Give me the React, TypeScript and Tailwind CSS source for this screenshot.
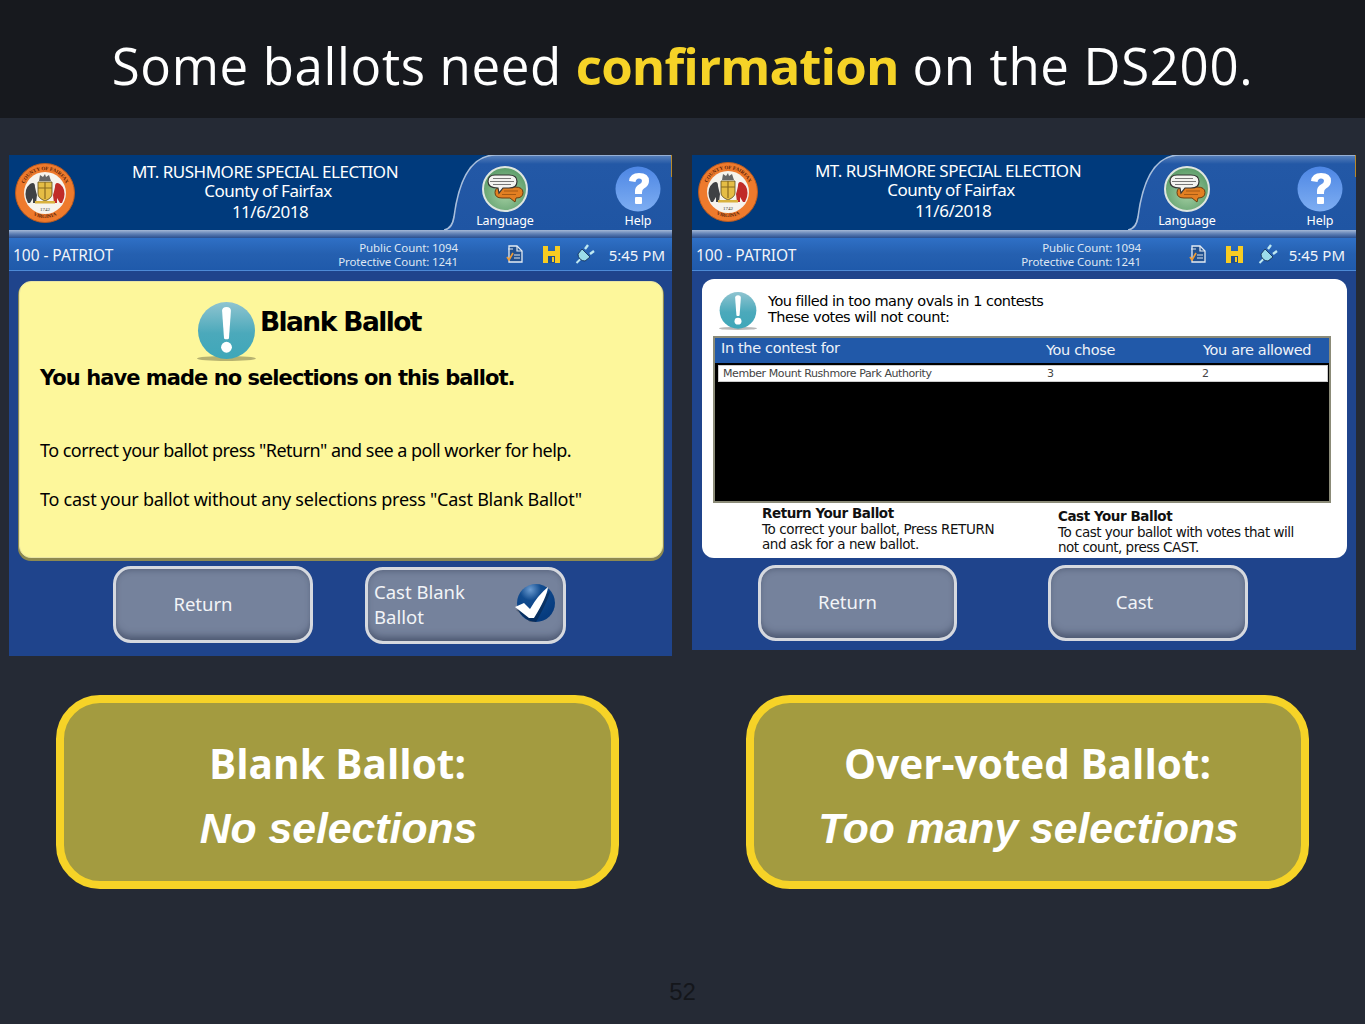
import React from "react";

const TAHOMA = "font-['Noto_Sans','DejaVu_Sans',sans-serif]";

function Seal() {
  return (
    <svg width="60" height="60" viewBox="0 0 60 60" className="shrink-0">
      <defs>
        <path id="sealTop" d="M7 30 A23 23 0 0 1 53 30" />
        <path id="sealBot" d="M5 30 A25 25 0 0 0 55 30" />
      </defs>
      <circle cx="30" cy="30" r="29.5" fill="#ee7a2c" />
      <circle cx="30" cy="30" r="29.5" fill="none" stroke="#b85a20" strokeWidth="1" />
      <text fontSize="5" fontWeight="700" fill="#5a2208" fontFamily="Liberation Serif, serif">
        <textPath href="#sealTop" startOffset="50%" textAnchor="middle">COUNTY OF FAIRFAX</textPath>
      </text>
      <text fontSize="5" fontWeight="700" fill="#5a2208" fontFamily="Liberation Serif, serif">
        <textPath href="#sealBot" startOffset="50%" textAnchor="middle">VIRGINIA</textPath>
      </text>
      <circle cx="30" cy="30" r="21" fill="#f6f3ec" />
      <path d="M24 18 l12 0 l-2 -6 l-3 2 l-1 -3 l-2 3 l-3 -2z" fill="#666" />
      <path d="M23 19 h14 v12 q0 4 -7 7 q-7 -3 -7 -7z" fill="#e5bd45" stroke="#5b4a1c" strokeWidth="0.8" />
      <path d="M23 25 h14 M30 19 v17" stroke="#8a6a20" strokeWidth="1.2" />
      <path d="M11 35 q-2 -9 4 -14 q5 -3 5 3 q1 5 2 8 l-1 8 l-3 0 l0 -5 l-3 5 l-2 0z" fill="#3f4144" />
      <path d="M49 35 q2 -9 -4 -14 q-5 -3 -5 3 q-1 5 -2 8 l1 8 l3 0 l0 -5 l3 5 l2 0z" fill="#c02b28" />
      <rect x="20" y="38" width="20" height="2.5" fill="#d9b23e" />
      <text x="30" y="47.5" textAnchor="middle" fontSize="5" fill="#333" fontFamily="Liberation Serif, serif">1742</text>
    </svg>
  );
}

function LangIcon() {
  return (
    <svg width="46" height="46" viewBox="0 0 46 46">
      <defs>
        <radialGradient id="lg" cx="50%" cy="60%" r="55%">
          <stop offset="0%" stopColor="#a6d0a4" />
          <stop offset="100%" stopColor="#5f9f6c" />
        </radialGradient>
      </defs>
      <circle cx="23" cy="23" r="22" fill="url(#lg)" stroke="#dfe6e0" strokeWidth="2" />
      <path d="M20 21 h13 q8 0 8 5.500 q0 5.500 -7 5.500 l-1 4 l-5 -4 h-8 q-7 0 -7 -5.500 q0 -5.500 7 -5.500z" fill="#e27f22" stroke="#6b3c10" strokeWidth="1" />
      <path d="M22 25 h14 M20 28.500 h14" stroke="#a55a14" strokeWidth="1" />
      <path d="M13 9 h14 q8 0 8 6.500 q0 6.500 -8 6.500 h-6 l-4 5 l-1 -5 q-10 0 -10 -6.500 q0 -6.500 7 -6.500z" fill="#f3f3f0" stroke="#333" strokeWidth="1.2" />
      <path d="M11 12.500 h18 M8 15.500 h24 M11 18.500 h18" stroke="#777" strokeWidth="1.2" />
    </svg>
  );
}

function HelpIcon() {
  return (
    <svg width="46" height="46" viewBox="0 0 46 46">
      <defs>
        <linearGradient id="hg" x1="0" y1="0" x2="0" y2="1">
          <stop offset="0%" stopColor="#4d86e4" />
          <stop offset="100%" stopColor="#7eaef2" />
        </linearGradient>
      </defs>
      <circle cx="23" cy="23" r="22.5" fill="url(#hg)" />
      <path d="M14 15 q1 -8 10 -8 q10 0 10 8 q0 5 -5 7.500 q-2 1.200 -2 4 v1.500 h-7 v-3 q0 -4.500 4 -6.500 q3 -1.500 3 -3.500 q0 -2.500 -3 -2.500 q-3 0 -3.500 3.500z" fill="#fff" />
      <rect x="20" y="31" width="7" height="7" rx="1" fill="#fff" />
    </svg>
  );
}

function StatusIcons({ x }: { x: string }) {
  return (
    <div className={`flex items-center -mt-[3px] ${x}`}>
      <svg width="20" height="20" viewBox="0 0 20 20">
        <path d="M4 2 h8 l5 5 v11 h-13z" fill="#20508f" stroke="#e4ebf3" strokeWidth="1.3" />
        <path d="M12 2 v5 h5" fill="none" stroke="#e4ebf3" strokeWidth="1.2" />
        <path d="M3 5 h5 M9 11 h6 M9 14 h6" stroke="#dbe3ee" strokeWidth="1.2" />
        <path d="M2 13 l2 3 l4 -7" fill="none" stroke="#f09a30" strokeWidth="1.7" />
      </svg>
      <svg width="19" height="19" viewBox="0 0 19 19" className="ml-[17px]">
        <path d="M1 1 h5 v5 h7 v-5 h5 v17 h-17z" fill="#f8cc22" />
        <rect x="6" y="11" width="7" height="7" fill="#20508f" />
        <rect x="10" y="12" width="2" height="5" fill="#f8cc22" />
      </svg>
      <svg width="20" height="20" viewBox="0 0 20 20" className="ml-[14px]">
        <path d="M1.500 19 l4 -4" stroke="#bfe9f2" strokeWidth="2" />
        <path d="M7 5 l8 8 l-5 4 q-3 0 -5 -2 q-2 -2 -2 -5z" fill="#9bdcea" stroke="#10294e" strokeWidth="0.8" />
        <path d="M10 5 l3 -4 M15 10 l4 -3" stroke="#bfe9f2" strokeWidth="2.400" />
      </svg>
    </div>
  );
}

function Alert({ size }: { size: number }) {
  const id = `al${size}`;
  return (
    <svg width={size} height={size} viewBox="0 0 60 60" className="shrink-0">
      <defs>
        <linearGradient id={id} x1="0" y1="0" x2="0" y2="1">
          <stop offset="0%" stopColor="#8fc4d0" />
          <stop offset="55%" stopColor="#4ba9bb" />
          <stop offset="100%" stopColor="#3fa7b9" />
        </linearGradient>
      </defs>
      <ellipse cx="30" cy="57.500" rx="30" ry="2.500" fill="#000" opacity="0.28" />
      <circle cx="30" cy="29" r="29" fill={`url(#${id})`} />
      <path d="M25.500 9 q0 -4 4.500 -4 q4.500 0 4.500 4 l-2 28 q-2.500 2 -5 0z" fill="#fff" />
      <circle cx="30" cy="46" r="5.500" fill="#fff" />
    </svg>
  );
}

function Check() {
  return (
    <svg width="44" height="40" viewBox="0 0 44 40">
      <defs>
        <radialGradient id="ck" cx="35%" cy="15%" r="80%">
          <stop offset="0%" stopColor="#6b9bd0" />
          <stop offset="35%" stopColor="#124c8f" />
          <stop offset="100%" stopColor="#063b7e" />
        </radialGradient>
      </defs>
      <circle cx="23" cy="19" r="19" fill="url(#ck)" />
      <path d="M2 24 l10 -4 l6 6 q8 -14 18 -21 q-2 10 -14 31 l-6 0z" fill="#000" opacity="0.25" transform="translate(1 2)" />
      <path d="M2 23 l9 -4 l6 6 q8 -14 18 -22 q-1 10 -14 31 l-5 0z" fill="#fff" />
    </svg>
  );
}

function Btn({ w, h, cls, children }: { w: string; h: string; cls?: string; children: React.ReactNode }) {
  return (
    <div
      className={`${w} ${h} ${cls ?? ""} shrink-0 rounded-[18px] border-[3px] border-[#d6d9df] bg-[#75829c] shadow-[inset_0_-7px_7px_-3px_rgba(50,60,85,0.6),inset_0_5px_5px_-3px_rgba(70,80,105,0.5)] flex items-center text-[#f2f4f7] text-[18.500px] leading-[25px] ${TAHOMA}`}
    >
      {children}
    </div>
  );
}

function Shell({
  w,
  h,
  nudge,
  statusPr,
  children,
}: {
  w: string;
  h: string;
  nudge: boolean;
  statusPr: string;
  children: React.ReactNode;
}) {
  const tid = nudge ? "tA" : "tB";
  return (
    <div className={`${w} ${h} shrink-0 bg-[#1f448c] flex flex-col ${TAHOMA}`}>
      <div className="h-[75px] bg-[#003a7c] relative flex shrink-0">
        <svg className="absolute right-0 top-0" width="228" height="75" viewBox="0 0 228 75">
          <defs>
            <linearGradient id={tid} x1="0" y1="0" x2="0" y2="1">
              <stop offset="0%" stopColor="#5b83bd" />
              <stop offset="12%" stopColor="#2358a6" />
              <stop offset="100%" stopColor="#1f55a3" />
            </linearGradient>
          </defs>
          <path d="M0 75 Q8 74 10 62 Q18 0 52 0 H228 V75 Z" fill={`url(#${tid})`} />
          <path d="M0 75 Q8 74 10 62 Q18 0 52 0 H228" fill="none" stroke="#a9bfdc" strokeWidth="1.600" />
          <rect x="227" y="0" width="1" height="22" fill="#b8892a" />
        </svg>
        <div className={`w-[60px] ml-[6px] shrink-0 ${nudge ? "mt-[8px]" : "mt-[7px]"}`}>
          <Seal />
        </div>
        <div className={`w-[390px] text-white text-[17px] leading-[19px] tracking-[-0.5px] text-center relative ${nudge ? "pt-[7px]" : "pt-[6px]"}`}>
          <div className="pr-[10px] whitespace-nowrap">MT. RUSHMORE SPECIAL ELECTION</div>
          <div className="pr-[4px]">County of Fairfax</div>
          <div className="pt-[2px]">11/6/2018</div>
        </div>
        <div className="absolute right-0 top-[11px] w-[228px] h-[64px]">
          <div className={`absolute ${nudge ? "left-[26px]" : "left-[24px]"} top-0 w-[70px] flex flex-col items-center`}>
            <LangIcon />
            <span className="mt-[2px] text-white text-[12.500px] leading-[14px] tracking-[-0.1px]">Language</span>
          </div>
          <div className={`absolute ${nudge ? "left-[166px]" : "left-[164px]"} top-0 w-[56px] flex flex-col items-center`}>
            <HelpIcon />
            <span className="mt-[2px] text-white text-[12.500px] leading-[14px] tracking-[-0.1px]">Help</span>
          </div>
        </div>
      </div>
      <div className="h-[8px] shrink-0 bg-gradient-to-b from-[#a4b8d6] via-[#5d7eb3] to-[#2a4f8f]" />
      <div className="h-[33px] shrink-0 pt-[3px] bg-gradient-to-b from-[#2f70c6] via-[#2560b0] to-[#1f5aab] border-b border-[#4d8ad6] flex items-center">
        <span className="pl-[4px] text-[#f2f5fa] text-[15.500px] tracking-[-0.05px] w-[200px]">100 - PATRIOT</span>
        <div className="w-[249px] -mt-[2px] text-right text-[#dfe7f3] text-[11.500px] leading-[14px] tracking-[-0.1px]">
          <div>Public Count: 1094</div>
          <div>Protective Count: 1241</div>
        </div>
        <StatusIcons x="ml-[47px]" />
        <span className={`ml-auto ${statusPr} text-[#f2f5fa] text-[15px]`}>5:45 PM</span>
      </div>
      {children}
    </div>
  );
}

function LeftPanel() {
  return (
    <Shell w="w-[663px]" h="h-[501px]" nudge statusPr="pr-[7px]">
      <div className="mt-[10px] ml-[10px] mr-[9px] h-[277px] bg-[#fdf79b] rounded-[12px] border border-[#e8e4a4] shadow-[0_2px_0_1px_#8e8a50] text-black flex flex-col">
        <div className="flex items-start pl-[177px] pt-[20px]">
          <Alert size={59} />
          <span className="ml-[4px] mt-[3px] text-[26.500px] leading-[34px] font-bold font-['DejaVu_Sans',sans-serif] tracking-[-1.600px]">Blank Ballot</span>
        </div>
        <div className="pl-[20px] mt-[3px] text-[21px] leading-[28px] font-bold font-['DejaVu_Sans',sans-serif] tracking-[-0.950px]">
          You have made no selections on this ballot.
        </div>
        <div className="pl-[20px] mt-[45px] text-[18px] leading-[26px] tracking-[-0.530px]">
          To correct your ballot press "Return" and see a poll worker for help.
        </div>
        <div className="pl-[20px] mt-[23px] text-[18px] leading-[26px] tracking-[-0.250px]">
          To cast your ballot without any selections press "Cast Blank Ballot"
        </div>
      </div>
      <div className="flex mt-[8px] pl-[104px]">
        <Btn w="w-[200px]" h="h-[77px]" cls="justify-center pr-[20px] pb-[2px]">Return</Btn>
        <Btn w="w-[201px]" h="h-[77px]" cls="ml-[52px] mt-[1px] pl-[6px] pb-[4px] justify-between pr-[6px]">
          <span>Cast Blank<br />Ballot</span>
          <Check />
        </Btn>
      </div>
    </Shell>
  );
}

function RightPanel() {
  return (
    <Shell w="w-[664px]" h="h-[495px]" nudge={false} statusPr="pr-[11px]">
      <div className="mt-[8px] ml-[10px] mr-[9px] h-[279px] bg-white rounded-[12px] text-black flex flex-col">
        <div className="flex items-start pl-[17px] pt-[13px] h-[57px] shrink-0">
          <Alert size={38} />
          <div className="ml-[11px] mt-[1px] text-[14.500px] leading-[16px] font-['DejaVu_Sans',sans-serif] tracking-[-0.500px]">
            <div>You filled in too many ovals in 1 contests</div>
            <div>These votes will not count:</div>
          </div>
        </div>
        <div className="ml-[11px] mr-[16px] h-[167px] shrink-0 border-2 border-[#8b8b78] bg-black flex flex-col">
          <div className="h-[25px] shrink-0 bg-[#2159a9] text-[#eef2f8] text-[14.500px] font-['DejaVu_Sans',sans-serif] tracking-[-0.350px] flex items-center relative">
            <span className="pl-[6px] w-[331px] -mt-[3px]">In the contest for</span>
            <span className="w-[157px]">You chose</span>
            <span className="whitespace-nowrap">You are allowed</span>
          </div>
          <div className="ml-[3px] mr-[1px] mt-[2px] h-[17px] pt-[2px] shrink-0 bg-white border border-[#ccc] text-[#444] text-[11px] font-['DejaVu_Sans',sans-serif] tracking-[-0.420px] flex items-center">
            <span className="pl-[4px] w-[328px]">Member Mount Rushmore Park Authority</span>
            <span className="w-[155px]">3</span>
            <span>2</span>
          </div>
        </div>
        <div className="flex font-['DejaVu_Sans',sans-serif] text-[13.500px] leading-[15.500px] tracking-[-0.400px] text-[#111]">
          <div className="pl-[60px] w-[356px] pt-[3px]">
            <div className="font-bold tracking-[-0.450px]">Return Your Ballot</div>
            <div>To correct your ballot, Press RETURN</div>
            <div>and ask for a new ballot.</div>
          </div>
          <div className="pt-[6px] tracking-[-0.500px]">
            <div className="font-bold tracking-[-0.450px]">Cast Your Ballot</div>
            <div>To cast your ballot with votes that will</div>
            <div>not count, press CAST.</div>
          </div>
        </div>
      </div>
      <div className="flex mt-[7px] pl-[66px]">
        <Btn w="w-[199px]" h="h-[76px]" cls="justify-center pr-[20px] pb-[3px]">Return</Btn>
        <Btn w="w-[200px]" h="h-[76px]" cls="ml-[91px] justify-center pr-[27px] pb-[3px]">Cast</Btn>
      </div>
    </Shell>
  );
}

function Callout({ a, b }: { a: string; b: string }) {
  return (
    <div className="w-[563px] h-[194px] shrink-0 rounded-[44px] border-[8px] border-[#f6d327] bg-[#a39b40] flex flex-col items-center text-white">
      <div className="mt-[29px] h-[64px] text-[40.500px] leading-[64px] font-bold font-['Open_Sans',sans-serif]">{a}</div>
      <div className="h-[64px] text-[42.700px] leading-[64px] font-bold italic font-['Liberation_Sans',sans-serif] pl-[2px]">{b}</div>
    </div>
  );
}

export default function App() {
  return (
    <div className="w-[1365px] h-[1024px] overflow-hidden bg-[#252a35] flex flex-col">
      <div className="h-[118px] shrink-0 pt-[12px] bg-[#17191e] flex items-center justify-center text-white text-[51px] font-['Open_Sans',sans-serif] whitespace-nowrap tracking-[0.65px]">
        <span>
          Some ballots need <b className="text-[#f6d327] font-bold tracking-[-0.9px]">confirmation</b> on the DS200.
        </span>
      </div>
      <div className="flex items-start gap-[20px] pl-[9px] pt-[37px] h-[577px] shrink-0">
        <LeftPanel />
        <RightPanel />
      </div>
      <div className="flex gap-[127px] pl-[56px]">
        <Callout a="Blank Ballot:" b="No selections" />
        <Callout a="Over-voted Ballot:" b="Too many selections" />
      </div>
      <div className="mt-[89px] text-center text-[24px] leading-[28px] text-[#14161b] font-['Liberation_Sans',sans-serif]">52</div>
    </div>
  );
}
